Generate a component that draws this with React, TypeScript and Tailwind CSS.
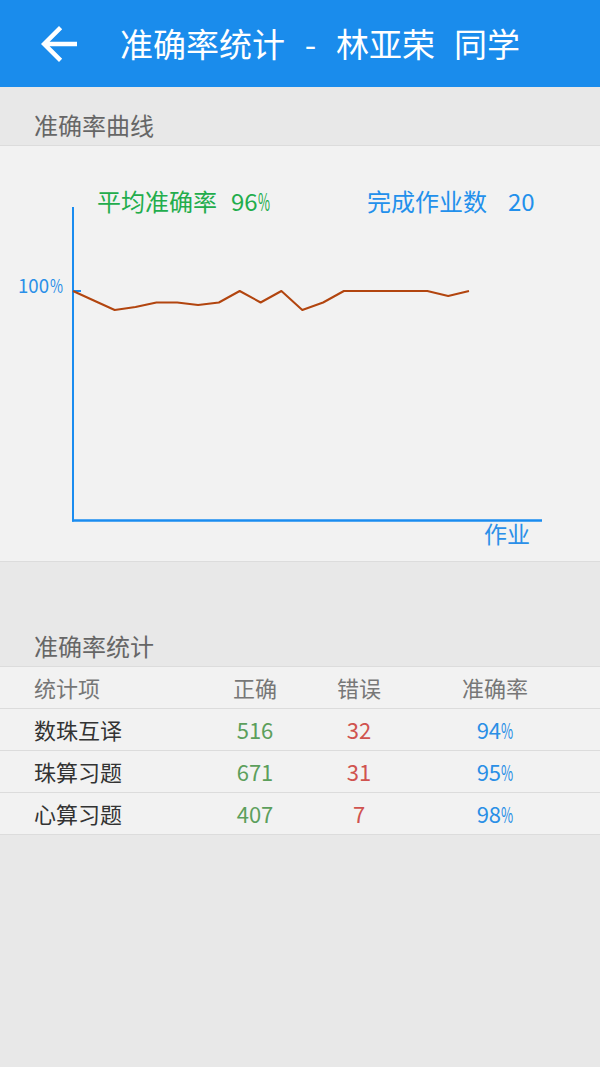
const points = [
  291, 300.5, 310, 307, 302.5, 302.5, 305, 302.5, 291, 302.5, 291, 310, 302.5, 291, 291, 291, 291, 291, 296, 291,
];

const rows = [
  { name: "数珠互译", right: 516, wrong: 32, rate: 94 },
  { name: "珠算习题", right: 671, wrong: 31, rate: 95 },
  { name: "心算习题", right: 407, wrong: 7, rate: 98 },
];

const TOP = 146;

function Chart() {
  const step = (469 - 73) / (points.length - 1);
  const d = points
    .map((y, i) => `${i === 0 ? "M" : "L"}${(73 + i * step).toFixed(1)} ${(y - TOP).toFixed(1)}`)
    .join(" ");

  return (
    <svg width="600" height="415" viewBox="0 0 600 415" className="block">
      {/* legend */}
      <text x="97" y="65" fontSize="24" fill="#22ad4c">平均准确率</text>
      <text x="231" y="65" fontSize="24" fill="#22ad4c">96</text>
      <text x="258" y="65" fontSize="24" fill="#22ad4c" textLength="12" lengthAdjust="spacingAndGlyphs">%</text>
      <text x="367" y="65" fontSize="24" fill="#2290ec">完成作业数</text>
      <text x="508" y="65" fontSize="24" fill="#2290ec">20</text>

      {/* axes */}
      <line x1="73" y1="61" x2="73" y2="375.5" stroke="#1a8cf0" strokeWidth="2" />
      <line x1="72" y1="374.5" x2="542" y2="374.5" stroke="#1a8cf0" strokeWidth="2.5" />
      <line x1="73" y1="145" x2="81" y2="145" stroke="#1a8cf0" strokeWidth="2" />
      <text x="18" y="147" fontSize="19" fill="#2a8fe8" textLength="31" lengthAdjust="spacingAndGlyphs">100</text>
      <text x="50" y="147" fontSize="19" fill="#2a8fe8" textLength="13" lengthAdjust="spacingAndGlyphs">%</text>
      <text x="484" y="397" fontSize="23" fill="#2a8fe8">作业</text>

      <path d={d} fill="none" stroke="#b2450f" strokeWidth="2" strokeLinejoin="round" />
    </svg>
  );
}

function Pct({ value }: { value: number }) {
  return (
    <span>
      {value}
      <span className="inline-block scale-x-[0.6] origin-left -mr-[8px]">%</span>
    </span>
  );
}

export default function App() {
  return (
    <div className="min-h-[1067px] w-[600px] bg-[#e8e8e8] font-['Noto_Sans_CJK_SC','Noto_Sans',sans-serif]">
      {/* Header */}
      <div className="h-[87px] bg-[#1a8cec] flex items-center text-white">
        <svg viewBox="0 0 24 24" className="ml-[32px] w-[54px] h-[54px] fill-white">
          <path d="M20 11H7.83l5.59-5.59L12 4l-8 8 8 8 1.41-1.41L7.83 13H20v-2z" />
        </svg>
        <div className="ml-[34px] flex items-center text-[33px] leading-none">
          <span>准确率统计</span>
          <span className="w-[51px] text-center">-</span>
          <span>林亚荣</span>
          <span className="ml-[19px]">同学</span>
        </div>
      </div>

      {/* Curve section */}
      <div className="pt-[22px] pb-[4px] pl-[34px] text-[24px] leading-[32px] text-[#666]">准确率曲线</div>
      <div className="bg-[#f2f2f2] border-y border-[#dcdcdc]">
        <Chart />
      </div>

      {/* Stats section */}
      <div className="pt-[68px] pb-[4px] pl-[34px] text-[24px] leading-[32px] text-[#666]">准确率统计</div>
      <div className="bg-[#f2f2f2] border-t border-[#dcdcdc]">
        <div className="grid grid-cols-[200px_110px_98px_174px] h-[42px] items-center border-b border-[#dcdcdc] text-[22px] text-[#777]">
          <span className="pl-[34px]">统计项</span>
          <span className="text-center">正确</span>
          <span className="text-center">错误</span>
          <span className="text-center">准确率</span>
        </div>
        {rows.map((r) => (
          <div
            key={r.name}
            className="grid grid-cols-[200px_110px_98px_174px] h-[42px] items-center border-b border-[#dcdcdc] text-[22px]"
          >
            <span className="pl-[34px] text-[#333]">{r.name}</span>
            <span className="text-center text-[#5c9f5c]">{r.right}</span>
            <span className="text-center text-[#d0534f]">{r.wrong}</span>
            <span className="text-center text-[#2a8fe6]">
              <Pct value={r.rate} />
            </span>
          </div>
        ))}
      </div>
    </div>
  );
}
